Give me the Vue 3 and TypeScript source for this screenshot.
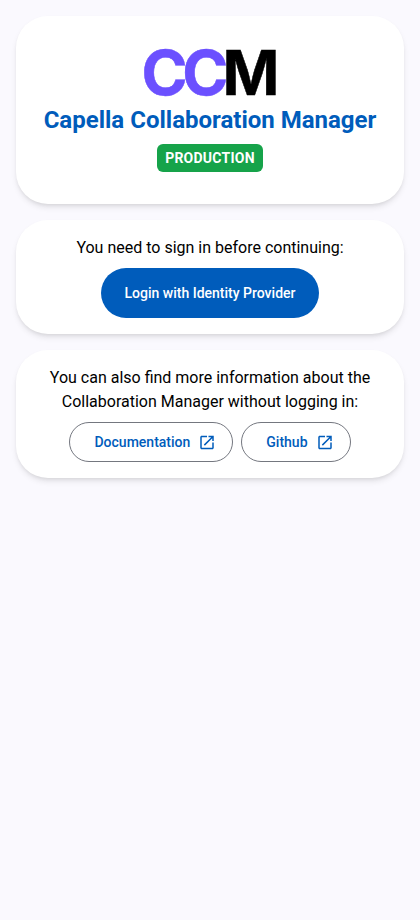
<script setup lang="ts">
interface Link {
  label: string
}
const links: Link[] = [{ label: 'Documentation' }, { label: 'Github' }]
</script>

<template>
  <main class="page">
    <section class="card hero">
      <svg class="logo" width="134" height="48" viewBox="0 0 134 48" aria-label="CCM">
        <text class="violet" x="-1.5 39.2" y="46.8">CC</text>
        <text class="black" transform="translate(79.4 46.8) scale(0.98 1)">M</text>
      </svg>
      <h1>Capella Collaboration Manager</h1>
      <span class="badge">PRODUCTION</span>
    </section>
    <section class="card login">
      <p>You need to sign in before continuing:</p>
      <button class="primary">Login with Identity Provider</button>
    </section>
    <section class="card info">
      <p>You can also find more information about the Collaboration Manager without logging in:</p>
      <div class="links">
        <button v-for="link in links" :key="link.label" class="outlined">
          {{ link.label }}
          <svg width="18" height="18" viewBox="0 -0.65 24 24" fill="currentColor">
            <path d="M19 19H5V5h7V3H5c-1.11 0-2 .9-2 2v14c0 1.1.89 2 2 2h14c1.1 0 2-.9 2-2v-7h-2v7zM14 3v2h3.59l-9.83 9.83 1.41 1.41L19 6.41V10h2V3h-7z" />
          </svg>
        </button>
      </div>
    </section>
  </main>
</template>

<style>
body {
  background: #faf9fe;
}
</style>

<style scoped>
.page {
  display: flex;
  flex-direction: column;
  gap: 16px;
  box-sizing: border-box;
  min-height: 920px;
  padding: 16px;
  background: #faf9fe;
  color: #000;
  font: 400 16px/24px Roboto, sans-serif;
}
.card {
  display: flex;
  flex-direction: column;
  align-items: center;
  box-sizing: border-box;
  padding: 16px;
  border-radius: 32px;
  background: #fff;
  box-shadow: 0 4px 6px -1px rgba(0, 0, 0, 0.1), 0 2px 4px -2px rgba(0, 0, 0, 0.1);
  text-align: center;
}
.hero {
  height: 188px;
  padding-top: 32px;
}
.login {
  height: 114px;
}
.info {
  height: 128px;
}
.logo {
  display: block;
  overflow: visible;
  font: 700 62.3px Inter, sans-serif;
  stroke-width: 0.5px;
}
.violet {
  fill: #6b50ff;
  stroke: #6b50ff;
}
.black {
  fill: #000;
  stroke: #000;
}
h1 {
  margin: 8px 0;
  color: #005cbb;
  font-size: 24px;
  font-weight: 700;
  line-height: 32px;
  white-space: nowrap;
}
.badge {
  padding: 4px 8px;
  border-radius: 6px;
  background: #16a34a;
  color: #fff;
  font-size: 14px;
  font-weight: 700;
  line-height: 20px;
  letter-spacing: 0.25px;
}
p {
  margin: 0 0 8px;
}
button {
  font: 500 14px/20px Roboto, sans-serif;
  white-space: nowrap;
}
.primary {
  height: 50px;
  padding: 0 24px;
  border: 0;
  border-radius: 25px;
  background: #005cbb;
  color: #fff;
}
.links {
  display: flex;
  gap: 8px;
}
.outlined {
  display: flex;
  align-items: center;
  gap: 8px;
  height: 40px;
  padding: 0 16px 0 24px;
  border: 1px solid #74777f;
  border-radius: 20px;
  background: transparent;
  color: #005cbb;
}
</style>
